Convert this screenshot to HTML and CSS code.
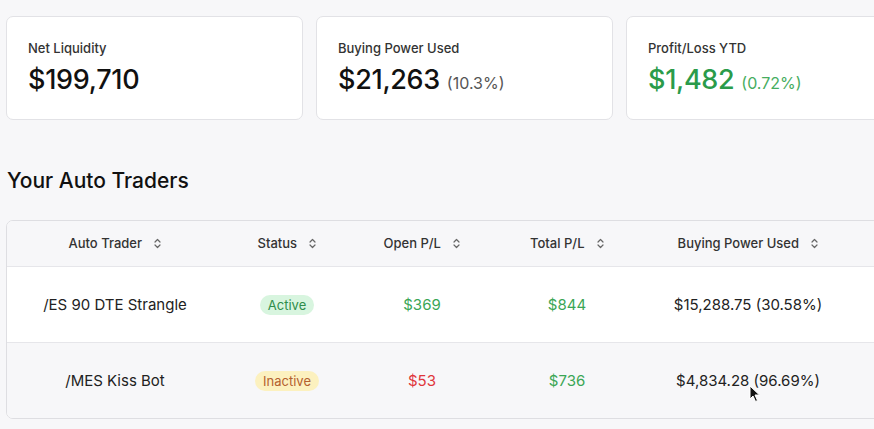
FILE: index.html
```html
<!DOCTYPE html>
<html lang="en">
<head>
    <meta charset="UTF-8">
    <meta name="viewport" content="width=device-width, initial-scale=1.0">
    <title>Dashboard</title>
    <link rel="stylesheet" href="styles.css">
</head>
<body>

    <!-- Summary cards -->
    <div class="stats">
        <div class="stat-card">
            <div class="stat-label">Net Liquidity</div>
            <div class="stat-value">$199,710</div>
        </div>
        <div class="stat-card">
            <div class="stat-label">Buying Power Used</div>
            <div class="stat-value">$21,263 <span class="stat-pct">(10.3%)</span></div>
        </div>
        <div class="stat-card">
            <div class="stat-label">Profit/Loss YTD</div>
            <div class="stat-value positive">$1,482 <span class="stat-pct">(0.72%)</span></div>
        </div>
    </div>

    <h2 class="section-title">Your Auto Traders</h2>

    <!-- Traders table -->
    <div class="traders">
        <div class="row head">
            <div class="cell">Auto Trader <span class="sort"><svg width="7" height="11" viewBox="0 0 7 11"><path d="M1 4 L3.5 1.5 L6 4 M1 7 L3.5 9.5 L6 7" fill="none" stroke="#666" stroke-width="1.2" stroke-linecap="round" stroke-linejoin="round"/></svg></span></div>
            <div class="cell">Status <span class="sort"><svg width="7" height="11" viewBox="0 0 7 11"><path d="M1 4 L3.5 1.5 L6 4 M1 7 L3.5 9.5 L6 7" fill="none" stroke="#666" stroke-width="1.2" stroke-linecap="round" stroke-linejoin="round"/></svg></span></div>
            <div class="cell">Open P/L <span class="sort"><svg width="7" height="11" viewBox="0 0 7 11"><path d="M1 4 L3.5 1.5 L6 4 M1 7 L3.5 9.5 L6 7" fill="none" stroke="#666" stroke-width="1.2" stroke-linecap="round" stroke-linejoin="round"/></svg></span></div>
            <div class="cell">Total P/L <span class="sort"><svg width="7" height="11" viewBox="0 0 7 11"><path d="M1 4 L3.5 1.5 L6 4 M1 7 L3.5 9.5 L6 7" fill="none" stroke="#666" stroke-width="1.2" stroke-linecap="round" stroke-linejoin="round"/></svg></span></div>
            <div class="cell">Buying Power Used <span class="sort"><svg width="7" height="11" viewBox="0 0 7 11"><path d="M1 4 L3.5 1.5 L6 4 M1 7 L3.5 9.5 L6 7" fill="none" stroke="#666" stroke-width="1.2" stroke-linecap="round" stroke-linejoin="round"/></svg></span></div>
            <div class="cell"></div>
        </div>
        <div class="row">
            <div class="cell">/ES 90 DTE Strangle</div>
            <div class="cell"><span class="badge active">Active</span></div>
            <div class="cell positive">$369</div>
            <div class="cell positive">$844</div>
            <div class="cell">$15,288.75 (30.58%)</div>
            <div class="cell"></div>
        </div>
        <div class="row striped">
            <div class="cell">/MES Kiss Bot</div>
            <div class="cell"><span class="badge inactive">Inactive</span></div>
            <div class="cell negative">$53</div>
            <div class="cell positive">$736</div>
            <div class="cell">$4,834.28 (96.69%)<svg class="cursor" width="12" height="18" viewBox="0 0 12 18"><path d="M1 1 L1 14 L4 11 L6.5 16.5 L8.5 15.5 L6 10 L10.5 10 Z" fill="#111" stroke="#fff" stroke-width="1"/></svg></div>
            <div class="cell"></div>
        </div>
    </div>

</body>
</html>
```

FILE: styles.css
```css
body {
    font-family: Inter, "Noto Sans", sans-serif;
    margin: 0;
    padding: 16px 0 0 6px;
    background-color: #f7f7f9;
    color: #1b1b1f;
    width: 874px;
    height: 429px;
    overflow: hidden;
}

.stats {
    display: flex;
    gap: 13px;
    width: 1100px;
}

.stat-card {
    flex: 0 0 297px;
    height: 104px;
    box-sizing: border-box;
    background-color: #fff;
    border: 1px solid #e2e2e6;
    border-radius: 7px;
    padding: 23px 0 0 21px;
}

.stat-label {
    font-size: 13px;
    font-weight: 500;
    color: #333;
}

.stat-value {
    margin-top: 7px;
    font-size: 27px;
    font-weight: 500;
    letter-spacing: -0.3px;
    color: #111;
}

.stat-pct {
    font-size: 16px;
    font-weight: 400;
    letter-spacing: 0;
    color: #555;
}

.stat-value.positive {
    color: #2a9b4a;
}

.stat-value.positive .stat-pct {
    color: #46ad60;
}

.section-title {
    margin: 48px 0 27px 1px;
    font-size: 21px;
    font-weight: 500;
    color: #111;
}

.traders {
    width: 1000px;
    background-color: #fff;
    border: 1px solid #dedee2;
    border-radius: 7px;
    overflow: hidden;
}

.row {
    display: grid;
    grid-template-columns: 216px 128px 142px 148px 214px 1fr;
    height: 75px;
    align-items: center;
    border-top: 1px solid #e6e6ea;
    font-size: 15px;
    color: #222;
}

.row.head {
    height: 45px;
    border-top: none;
    background-color: #f7f7f9;
    font-size: 13px;
    font-weight: 500;
    color: #333;
}

.row.striped {
    background-color: #f7f7f9;
}

.cell {
    text-align: center;
    position: relative;
}

.sort {
    display: inline-block;
    margin-left: 9px;
    vertical-align: -1px;
}

.positive {
    color: #3aa655;
}

.negative {
    color: #e0363b;
}

.badge {
    display: inline-block;
    padding: 2px 8px;
    border-radius: 10px;
    font-size: 13px;
}

.badge.active {
    background-color: #d8f5df;
    color: #2f8d4b;
}

.badge.inactive {
    background-color: #fcf1bf;
    color: #b4612f;
}

.cursor {
    position: absolute;
    left: 108px;
    top: 14px;
}
```
